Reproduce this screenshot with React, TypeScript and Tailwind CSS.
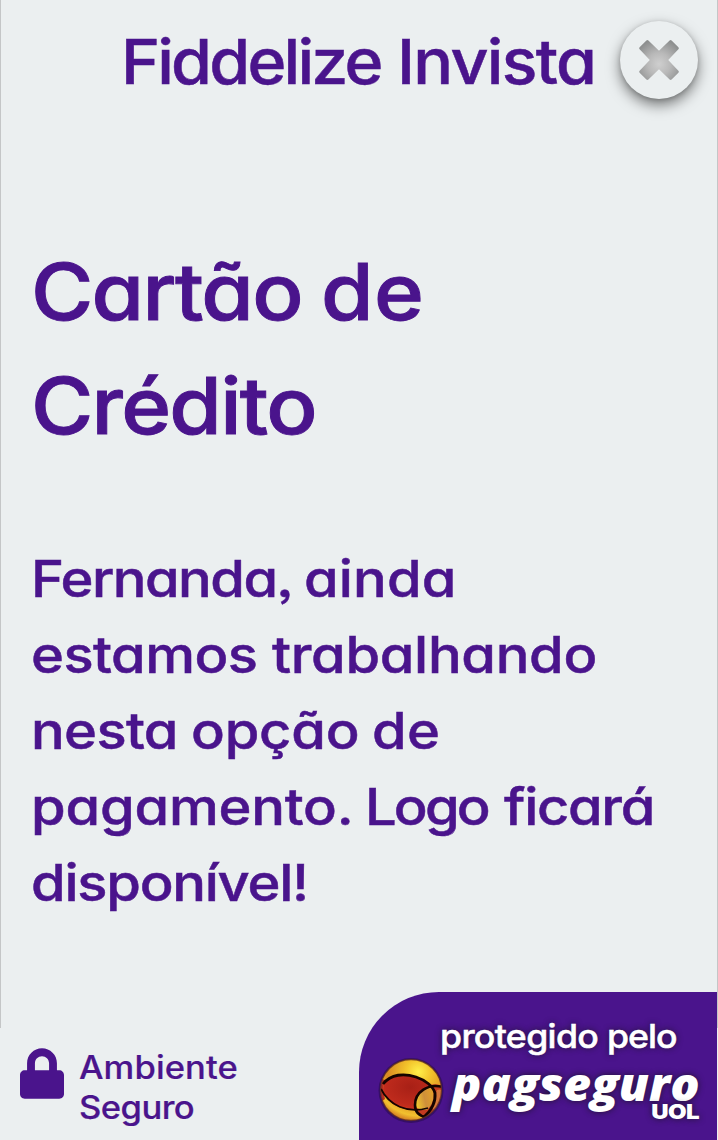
import type { ReactNode } from 'react';
import { FaLock } from 'react-icons/fa';

type WordProps = { children: ReactNode; className?: string };

function Word({ children, className = '' }: WordProps) {
  return <span className={`inline-block shrink-0 origin-left whitespace-nowrap ${className}`}>{children}</span>;
}

function Line({ children, className = '' }: WordProps) {
  return <span className={`flex ${className}`}>{children}</span>;
}

function CloseButton() {
  return (
    <button
      type="button"
      aria-label="Fechar"
      className="mt-[21px] flex h-[78px] w-[78px] shrink-0 items-center justify-center rounded-full bg-[#ebeff0] shadow-[0_6px_14px_rgba(0,0,0,0.5),0_1px_4px_rgba(0,0,0,0.15)]"
    >
      <svg width="44" height="44" viewBox="-22 -22 44 44">
        <defs>
          <radialGradient id="cross" gradientUnits="userSpaceOnUse" cx="0" cy="4" r="25">
            <stop offset="0" stopColor="#cfcfcf" />
            <stop offset="0.45" stopColor="#b9b9b9" />
            <stop offset="1" stopColor="#8d8f8f" />
          </radialGradient>
        </defs>
        <path
          d="M0-9.2 10.6-19.5Q11.6-20.4 12.6-19.5L19.4-12.8Q20.4-11.8 19.4-10.8L9.2 0 19.4 10.8Q20.4 11.8 19.4 12.8L12.6 19.5Q11.6 20.4 10.6 19.5L0 9.2-10.6 19.5Q-11.6 20.4-12.6 19.5L-19.4 12.8Q-20.4 11.8-19.4 10.8L-9.2 0-19.4-10.8Q-20.4-11.8-19.4-12.8L-12.6-19.5Q-11.6-20.4-10.6-19.5Z"
          fill="url(#cross)"
        />
      </svg>
    </button>
  );
}

function Ball() {
  return (
    <svg width="68" height="68" viewBox="0 0 68 68" className="shrink-0">
      <defs>
        <radialGradient id="gold" cx="0.62" cy="0.2" r="0.85">
          <stop offset="0" stopColor="#fff04a" />
          <stop offset="0.25" stopColor="#f3c32b" />
          <stop offset="0.6" stopColor="#d98a22" />
          <stop offset="0.85" stopColor="#f2c02e" />
          <stop offset="1" stopColor="#c8641f" />
        </radialGradient>
        <radialGradient id="red" cx="0.55" cy="0.35" r="0.8">
          <stop offset="0" stopColor="#a82016" />
          <stop offset="0.6" stopColor="#bd2a1c" />
          <stop offset="1" stopColor="#e0391f" />
        </radialGradient>
        <linearGradient id="amber" x1="0" y1="0.6" x2="1" y2="0.3">
          <stop offset="0" stopColor="#f2cb2e" />
          <stop offset="0.5" stopColor="#cf8f3a" />
          <stop offset="1" stopColor="#e3a02a" />
        </linearGradient>
        <clipPath id="disc">
          <circle cx="34" cy="34" r="30.5" />
        </clipPath>
      </defs>
      <circle cx="34" cy="34.5" r="32.5" fill="#1c0838" opacity="0.45" />
      <circle cx="34" cy="34" r="30.5" fill="url(#gold)" />
      <g clipPath="url(#disc)">
        <path d="M1 22 8 24Q5 33 8 43L4 46Z" fill="#b62c22" />
        <path d="M7 27C14 18 27 17 38 21 47 24 53 26 56 32 45 36 38 42 38 54 22 54 10 47 6 34Z" fill="url(#red)" />
        <path d="M53 29Q61 27 66 31L64 46Q58 54 51 61L44 60Q38 58 38 50Q50 55 55 43Q58 36 53 29Z" fill="#c43a20" />
        <path d="M60 34Q67 32 67 40L59 55Q54 55 57 44Z" fill="#d5763a" />
        <path d="M38 50C37 40 44 31 54 31 59 38 57 47 50 54 44 54 40 53 38 50Z" fill="url(#amber)" />
        <path d="M6 28C14 18 27 17 39 21 48 24 56 30 58 37 59 46 54 55 46 62" fill="none" stroke="#150400" strokeWidth="2.8" />
        <path d="M4 33C12 49 30 58 51 52" fill="none" stroke="#150400" strokeWidth="1.8" />
        <path d="M66 31C51 27 38 36 38 49 38 56 42 60 49 61" fill="none" stroke="#150400" strokeWidth="2.6" />
      </g>
      <circle cx="34" cy="34" r="30.5" fill="none" stroke="#5c2b20" strokeWidth="1.3" opacity="0.75" />
    </svg>
  );
}

export default function App() {
  return (
    <div className="flex h-[1140px] w-[718px] flex-col overflow-hidden bg-[#ebeff0] font-['Inter',sans-serif] font-medium text-[#4a148c] [-webkit-text-stroke:0.5px_#4a148c] [font-feature-settings:'cv11','ss03']">
      <main className="h-[1028px] shrink-0 border-x border-[#c4c6c7]">
        <header className="flex h-[233px] items-start pl-[120px]">
          <h2 className="mt-[21px] flex w-[499px] shrink-0 text-[62.5px] leading-[80px]">
            <Word className="w-[276px] scale-x-[1.06] tracking-[-2.65px]">Fiddelize</Word>
            <Word className="scale-x-[1.06] tracking-[-1.6px]">Invista</Word>
          </h2>
          <CloseButton />
        </header>
        <h1 className="pl-[30px] pt-[2px] text-[78px] leading-[114px] [-webkit-text-stroke:0.9px_#4a148c]">
          <Line>
            <Word className="w-[290px] scale-x-[1.09] tracking-[-1.6px]">Cartão</Word>
            <Word className="scale-x-[1.09] tracking-[0.5px]">de</Word>
          </Line>
          <Line>
            <Word className="scale-x-[1.09] tracking-[-1.6px]">Crédito</Word>
          </Line>
        </h1>
        <p className="mt-[78px] pl-[30px] text-[51px] leading-[76px]">
          <Line>
            <Word className="w-[273px] scale-x-[1.1] tracking-[-1.4px]">Fernanda,</Word>
            <Word className="scale-x-[1.1] tracking-[0.1px]">ainda</Word>
          </Line>
          <Line>
            <Word className="w-[241px] scale-x-[1.1] tracking-[-0.5px]">estamos</Word>
            <Word className="scale-x-[1.1] tracking-[-0.3px]">trabalhando</Word>
          </Line>
          <Line>
            <Word className="w-[160px] scale-x-[1.1] tracking-[-0.6px]">nesta</Word>
            <Word className="w-[181px] scale-x-[1.1] tracking-[-0.2px]">opção</Word>
            <Word className="scale-x-[1.1] tracking-[0.4px]">de</Word>
          </Line>
          <Line>
            <Word className="w-[334px] scale-x-[1.1] tracking-[-0.2px]">pagamento.</Word>
            <Word className="w-[139px] scale-x-[1.1] tracking-[-2.6px]">Logo</Word>
            <Word className="scale-x-[1.1] tracking-[-1.2px]">ficará</Word>
          </Line>
          <Line>
            <Word className="scale-x-[1.1] tracking-[-1.15px]">disponível!</Word>
          </Line>
        </p>
      </main>
      <footer className="-mt-9 flex h-[148px] shrink-0 pr-px">
        <div className="flex w-[359px] shrink-0 pl-5 pt-14">
          <FaLock className="h-[51px] w-[44px] shrink-0" />
          <p className="ml-[15px] text-[32px] leading-[40px] [-webkit-text-stroke:0.2px_#4a148c]">
            <Line>
              <Word className="scale-x-[1.08] tracking-[0.1px]">Ambiente</Word>
            </Line>
            <Line>
              <Word className="scale-x-[1.08] tracking-[-0.5px]">Seguro</Word>
            </Line>
          </p>
        </div>
        <div className="w-[358px] shrink-0 rounded-tl-[80px] bg-[#4a148c] pt-6 text-white [-webkit-text-stroke:0px]">
          <p className="flex pl-[81px] text-[33px] leading-[40px] [-webkit-text-stroke:0.5px_white] [text-shadow:0_0_6px_rgba(20,20,20,0.8)]">
            <Word className="w-[167px] scale-x-[1.08] tracking-[-0.6px]">protegido</Word>
            <Word className="scale-x-[1.08] tracking-[-0.9px]">pelo</Word>
          </p>
          <div className="flex pl-[18px] [text-shadow:0_0_6px_rgba(20,20,20,0.8)]">
            <Ball />
            <div className="w-[254px] shrink-0 pl-[7px] pt-[7px]">
              <p className="origin-left scale-x-[1.055] whitespace-nowrap font-['Open_Sans',sans-serif] text-[46px] leading-[40px] font-extrabold italic">pagseguro</p>
              <p className="origin-right scale-x-[1.2] pt-px text-right text-[20px] leading-[16px] font-black tracking-[-0.5px]">UOL</p>
            </div>
          </div>
        </div>
      </footer>
    </div>
  );
}
